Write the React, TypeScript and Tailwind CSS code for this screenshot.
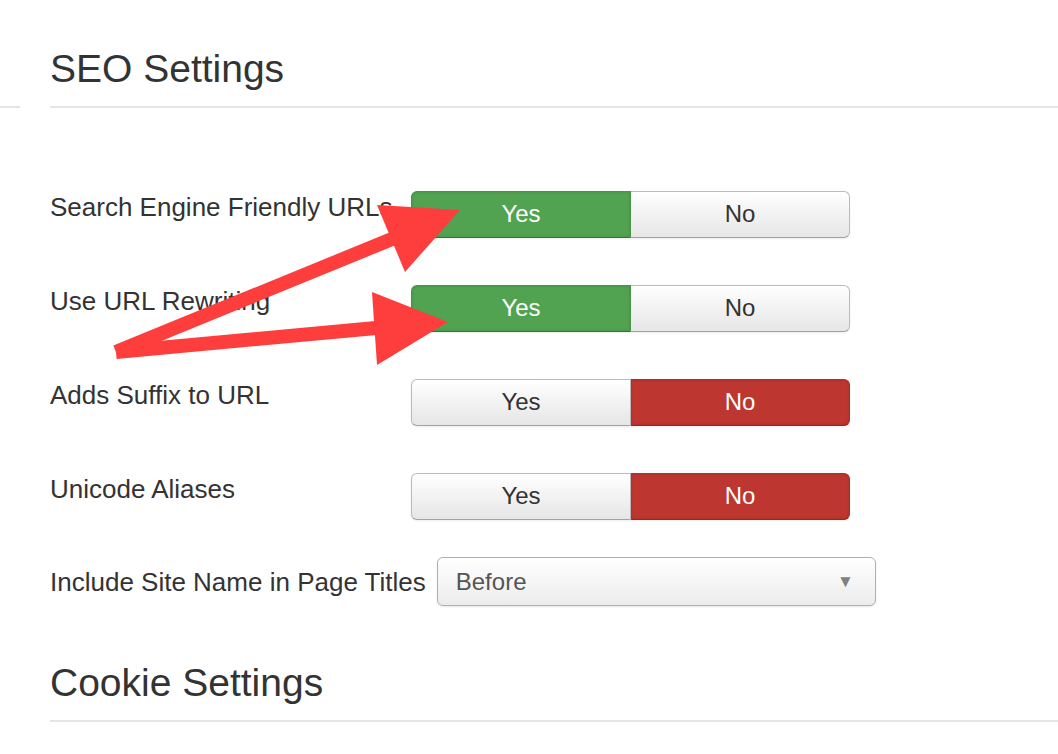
import React from "react";

type Choice = "yes" | "no";

const rows: { label: string; value: Choice }[] = [
  { label: "Search Engine Friendly URLs", value: "yes" },
  { label: "Use URL Rewriting", value: "yes" },
  { label: "Adds Suffix to URL", value: "no" },
  { label: "Unicode Aliases", value: "no" },
];

function YesNo({ value }: { value: Choice }) {
  const base =
    "flex-1 flex items-center justify-center text-[24px] leading-none border";
  const idle =
    "bg-gradient-to-b from-white to-[#e6e6e6] border-[#bbbbbb] border-b-[#a2a2a2] text-[#333]";
  const yesOn =
    "bg-[#51a351] border-[#4a944a] border-b-[#387038] text-white shadow-[inset_0_0_3px_rgba(0,0,0,0.15)]";
  const noOn =
    "bg-[#bd362f] border-[#ab312b] border-b-[#942a25] text-white shadow-[inset_0_0_3px_rgba(0,0,0,0.15)]";

  return (
    <div className="flex w-[439px] h-[47px] shadow-[0_1px_2px_rgba(0,0,0,0.08)] rounded-[6px]">
      <div
        className={`${base} rounded-l-[6px] pb-[2px] ${value === "yes" ? yesOn : idle}`}
      >
        Yes
      </div>
      <div
        className={`${base} rounded-r-[6px] pb-[2px] border-l-0 ${value === "no" ? noOn : idle}`}
      >
        No
      </div>
    </div>
  );
}

function Arrows() {
  return (
    <svg
      className="absolute inset-0 pointer-events-none"
      width="1058"
      height="754"
      viewBox="0 0 1058 754"
    >
      <g fill="#fe3d3d" stroke="#fe3d3d">
        {/* upper arrow */}
        <line x1="116" y1="352" x2="392" y2="239" strokeWidth="14" />
        <polygon points="377,205 460,210 405,272" stroke="none" />
        {/* lower arrow */}
        <line x1="116" y1="352" x2="376" y2="328" strokeWidth="14" />
        <polygon points="372,292 448,322 377,365" stroke="none" />
      </g>
    </svg>
  );
}

export default function App() {
  return (
    <div
      className="relative w-[1058px] h-[754px] overflow-hidden bg-white text-[#333]"
      style={{ fontFamily: '"Liberation Sans", Arial, sans-serif' }}
    >
      <div className="flex">
        {/* edge of the neighbouring column */}
        <div className="w-[20px] shrink-0 mt-[106px] border-t-2 border-[#e5e5e5] self-start" />

        <div className="flex-1 ml-[30px]">
          <h2 className="text-[39px] leading-[44px] font-normal mt-[47px] pb-[15px] border-b-2 border-[#e5e5e5]">
            SEO Settings
          </h2>

          <div className="mt-[83px] flex flex-col gap-[47px]">
            {rows.map((r) => (
              <div key={r.label} className="flex items-start">
                <div className="w-[361px] shrink-0 text-[26px] leading-[30px] pt-[1px]">
                  {r.label}
                </div>
                <YesNo value={r.value} />
              </div>
            ))}
          </div>

          <div className="mt-[37px] flex items-center gap-[11px]">
            <div className="text-[26px] leading-[30px]">
              Include Site Name in Page Titles
            </div>
            <div className="w-[439px] h-[49px] flex items-center justify-between pl-[18px] pr-[21px] rounded-[6px] border border-[#b0b0b0] bg-gradient-to-b from-white to-[#ececec] shadow-[0_1px_2px_rgba(0,0,0,0.1)]">
              <span className="text-[24px] text-[#555]">Before</span>
              <span className="text-[17px] text-[#808080]">▼</span>
            </div>
          </div>

          <h2 className="text-[39px] leading-[44px] font-normal mt-[55px] pb-[15px] border-b-2 border-[#e5e5e5]">
            Cookie Settings
          </h2>
        </div>
      </div>

      <Arrows />
    </div>
  );
}
